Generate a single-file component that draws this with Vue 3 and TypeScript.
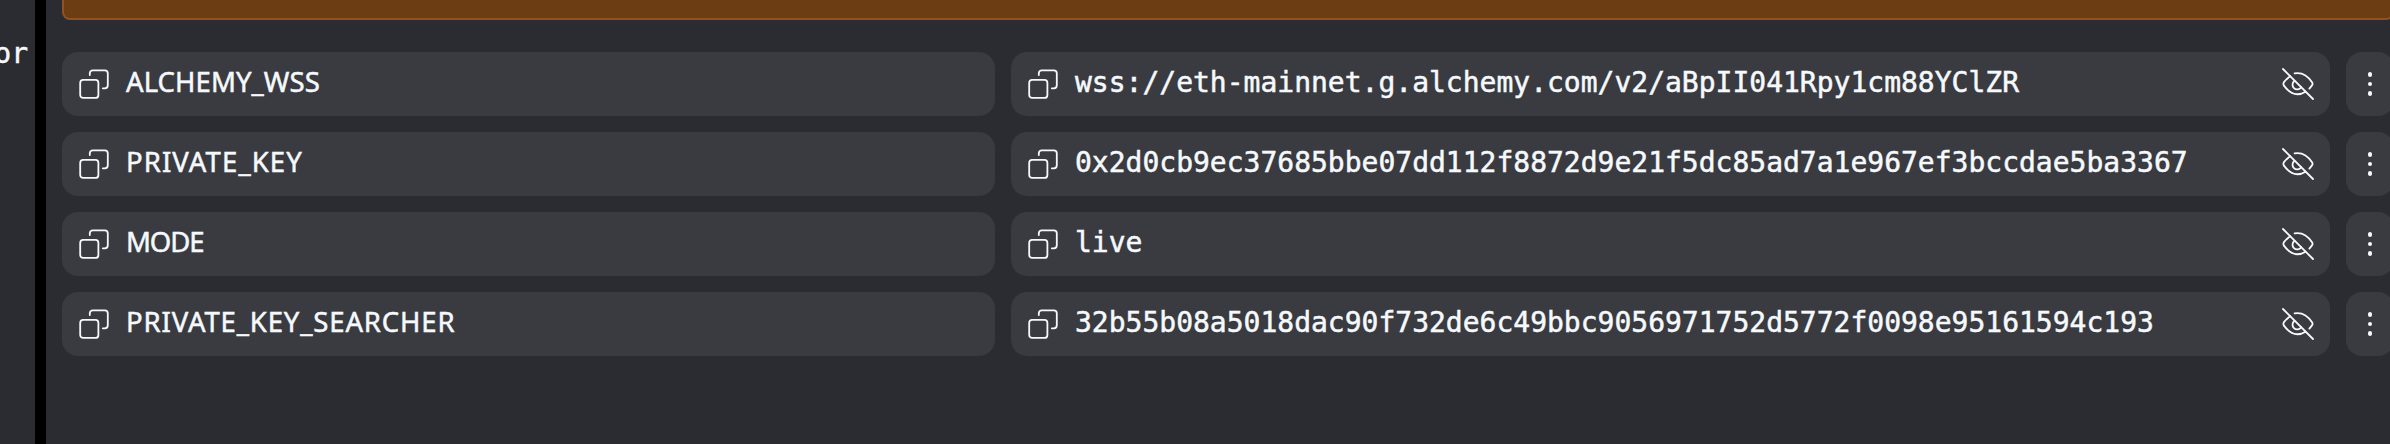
<script setup lang="ts">
interface Secret {
  name: string
  value: string
  tracking: string
}

const secrets: Secret[] = [
  { name: 'ALCHEMY_WSS', value: 'wss://eth-mainnet.g.alchemy.com/v2/aBpII041Rpy1cm88YClZR', tracking: 'even' },
  { name: 'PRIVATE_KEY', value: '0x2d0cb9ec37685bbe07dd112f8872d9e21f5dc85ad7a1e967ef3bccdae5ba3367', tracking: 'loose' },
  { name: 'MODE', value: 'live', tracking: 'tight' },
  { name: 'PRIVATE_KEY_SEARCHER', value: '32b55b08a5018dac90f732de6c49bbc9056971752d5772f0098e95161594c193', tracking: 'open' },
]
</script>

<template>
  <div class="app">
    <aside class="side"><span class="side-text">or</span></aside>
    <div class="divider"></div>
    <main class="panel">
      <div class="banner"></div>
      <div class="rows">
        <div v-for="s in secrets" :key="s.name" class="row">
          <div class="card">
            <svg class="copy" viewBox="0 0 32 32" fill="none">
              <rect x="2.2" y="11.9" width="18.2" height="18" rx="3" />
              <path d="M11.8 7V5.3a3 3 0 0 1 3-3H26.8a3 3 0 0 1 3 3V17.3a3 3 0 0 1-3 3H24.8" />
            </svg>
            <span class="name" :class="s.tracking">{{ s.name }}</span>
          </div>
          <div class="card">
            <svg class="copy" viewBox="0 0 32 32" fill="none">
              <rect x="2.2" y="11.9" width="18.2" height="18" rx="3" />
              <path d="M11.8 7V5.3a3 3 0 0 1 3-3H26.8a3 3 0 0 1 3 3V17.3a3 3 0 0 1-3 3H24.8" />
            </svg>
            <span class="value">{{ s.value }}</span>
            <svg class="eye" viewBox="0 0 32 32" fill="none">
              <path d="M1 1L31 31" />
              <path d="M12.6 5.3C20 4 26 8 30.2 14.4Q31 16 30 17.4L27.4 20.6" />
              <path d="M8.2 8.2Q4.5 10.8 1.8 14.4Q1 16 1.8 17.4C8 26 15 29 23.6 23.7" />
              <path d="M12.6 12.8A4.7 4.7 0 1 0 19.2 19.2" />
            </svg>
          </div>
          <div class="card menu">
            <i class="dot"></i><i class="dot"></i><i class="dot"></i>
          </div>
        </div>
      </div>
    </main>
  </div>
</template>

<style>
body { margin: 0; overflow: hidden; background: #2b2c31; }
</style>

<style scoped>
.app {
  display: flex;
  width: 2390px;
  height: 444px;
  overflow: hidden;
  background: #2b2c31;
  color: #f5f9fc;
}
.side {
  display: flex;
  justify-content: flex-end;
  box-sizing: border-box;
  flex: none;
  width: 35px;
  padding: 36px 7px 0 0;
  overflow: hidden;
}
.side-text, .value {
  font: 28px/36px "DejaVu Sans Mono", monospace;
  white-space: pre;
  -webkit-text-stroke: 0.5px currentColor;
}
.divider { flex: none; width: 11px; background: #000; }
.panel { flex: none; width: 2348px; padding-left: 16px; box-sizing: border-box; }
.banner {
  box-sizing: border-box;
  height: 20px;
  border: 2px solid #94501f;
  border-top: 0;
  border-radius: 0 0 8px 8px;
  background: #6c3c13;
}
.rows { display: flex; flex-direction: column; gap: 16px; padding-top: 32px; }
.row { display: grid; grid-template-columns: 933px 1319px 48px; gap: 16px; height: 64px; }
.card {
  display: flex;
  align-items: center;
  box-sizing: border-box;
  padding-left: 16px;
  border-radius: 16px;
  background: #3a3b40;
}
.copy {
  flex: none;
  width: 32px;
  height: 32px;
  margin-right: 16px;
  stroke: currentColor;
  stroke-width: 1.8;
  stroke-linecap: round;
}
.name {
  font: 27.5px/36px "Noto Sans", sans-serif;
  margin-bottom: 4px;
  white-space: pre;
  -webkit-text-stroke: 0.5px currentColor;
}
.even { letter-spacing: 0.08px; }
.loose { letter-spacing: 1.1px; }
.tight { letter-spacing: -1.1px; }
.open { letter-spacing: 0.86px; }
.value { flex: 1; margin-bottom: 2px; }
.eye {
  flex: none;
  width: 32px;
  height: 32px;
  margin-right: 16px;
  stroke: currentColor;
  stroke-width: 1.8;
  stroke-linecap: round;
}
.menu { flex-direction: column; justify-content: center; gap: 4.7px; padding: 0; }
.dot { width: 4.7px; height: 4.7px; border-radius: 50%; background: currentColor; }
</style>
